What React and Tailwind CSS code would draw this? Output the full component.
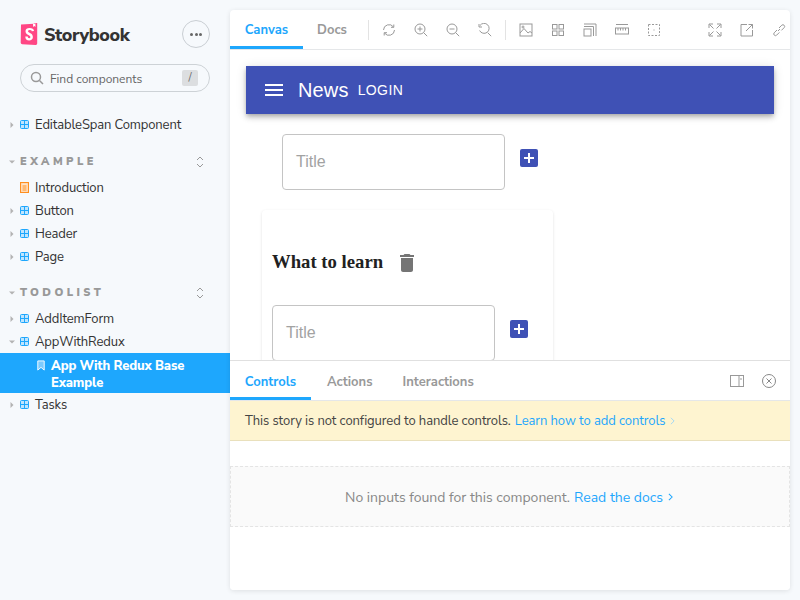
const sans = 'font-["Nunito_Sans","Open_Sans",sans-serif]';

function ComponentIcon({ className = 'text-[#1ea7fd]' }) {
  return (
    <svg viewBox="0 0 9 9" className={`w-[9px] h-[9px] shrink-0 ${className}`} fill="#bfe5fe" stroke="currentColor" strokeWidth="1">
      <rect x="0.5" y="0.5" width="8" height="8" rx="1" />
      <path d="M4.500 0.5V8.500M0.5 4.500H8.500" />
    </svg>
  );
}

function Arrow({ open }) {
  if (open) {
    return (
      <svg viewBox="0 0 6 6" className="w-[6px] h-[6px] shrink-0 text-[#b3b3b3]" fill="currentColor">
        <path d="M0 1.5H6L3 4.5Z" />
      </svg>
    );
  }
  return (
    <svg viewBox="0 0 6 6" className="w-[6px] h-[6px] shrink-0 text-[#b3b3b3]" fill="currentColor">
      <path d="M1.5 0V6L4.500 3Z" />
    </svg>
  );
}

function TreeItem({ label, open, noArrow, icon }) {
  return (
    <div className="flex items-center h-[23px] pl-[9px] text-[13px] text-[#333]">
      <span className="w-[11px] flex">{!noArrow && <Arrow open={open} />}</span>
      {icon || <ComponentIcon />}
      <span className="ml-[6px] pt-[3px] tracking-[-0.12px]">{label}</span>
    </div>
  );
}

function GroupHeader({ label }) {
  return (
    <div className="flex items-center h-[23px] pl-[9px] pr-[25px] mb-[3px]">
      <span className="w-[11px] flex"><Arrow open /></span>
      <span className="flex-1 pt-[2px] text-[11px] font-black tracking-[0.31em] text-[#999]">{label}</span>
      <svg viewBox="0 0 10 12" className="w-[10px] h-[12px] text-[#999]" fill="none" stroke="currentColor" strokeWidth="1">
        <path d="M2 4L5 1L8 4M2 8L5 11L8 8" />
      </svg>
    </div>
  );
}

function Sidebar() {
  return (
    <div className="w-[230px] shrink-0 flex flex-col">
      <div className="flex items-center justify-between px-[20px] pt-[20px]">
        <div className="flex items-center">
          <svg viewBox="0 0 18 22" className="w-[18px] h-[22px]">
            <path d="M1 1.5L14 0.8V0.2L17.2 0V20.5Q17.2 22 15.6 21.9L2.2 21.3Q0.8 21.2 0.7 19.8Z" fill="#ff4785" />
            <path d="M13 0.9L13.2 4L14.4 3.1L15.5 4L15.4 0.6Z" fill="#fff" />
            <path d="M11.8 8.2Q11.8 7.1 9.8 7.1Q8 7.1 8 8.3C8 10 12.9 10 12.9 14C12.9 16.2 11.3 17.4 9.1 17.4C6.8 17.4 5.2 16.1 5.3 13.5L7.7 13.6Q7.7 15.2 9.1 15.2Q10.4 15.2 10.4 14C10.4 12 5.5 12.1 5.5 8.3C5.5 6.1 7.1 5 9.6 5C11.9 5 14.1 5.9 14 8Z" fill="#fff" />
          </svg>
          <span className="ml-[6px] pt-[1px] text-[18px] font-extrabold tracking-[-0.4px] text-[#333] leading-[26px]">Storybook</span>
        </div>
        <div className="w-[28px] h-[28px] rounded-full border border-[#c9ced3] flex items-center justify-center gap-[1.5px]">
          <span className="w-[3px] h-[3px] rounded-full bg-[#666]" />
          <span className="w-[3px] h-[3px] rounded-full bg-[#666]" />
          <span className="w-[3px] h-[3px] rounded-full bg-[#666]" />
        </div>
      </div>
      <div className="mx-[20px] mt-[16px] h-[28px] rounded-full border border-[#cdd2d6] flex items-center pl-[9px] pr-[11px]">
        <svg viewBox="0 0 14 14" className="w-[14px] h-[14px] text-[#999]" fill="none" stroke="currentColor" strokeWidth="1.5">
          <circle cx="6" cy="6" r="4.5" />
          <path d="M9.5 9.5L13 13" />
        </svg>
        <span className="ml-[6px] flex-1 pt-[2px] text-[12px] text-[#666]">Find components</span>
        <span className="w-[16px] h-[16px] bg-[#dcdee0] rounded-[2px] text-[11px] text-[#666] flex items-center justify-center">/</span>
      </div>

      <div className="mt-[21px]">
        <TreeItem label="EditableSpan Component" />
      </div>
      <div className="mt-[14px]">
        <GroupHeader label="EXAMPLE" />
        <TreeItem
          label="Introduction"
          noArrow
          icon={
            <svg viewBox="0 0 9 11" className="w-[9px] h-[11px] shrink-0" fill="#ffe3c7" stroke="#ff8f1f" strokeWidth="1.2">
              <rect x="0.5" y="0.5" width="8" height="10" />
              <path d="M2.500 4H6.500M2.500 6H6.500M2.500 8H6.500" strokeWidth="1" />
            </svg>
          }
        />
        <TreeItem label="Button" />
        <TreeItem label="Header" />
        <TreeItem label="Page" />
      </div>
      <div className="mt-[13px]">
        <GroupHeader label="TODOLIST" />
        <TreeItem label="AddItemForm" />
        <TreeItem label="AppWithRedux" open />
        <div className="flex bg-[#1ea7fd] text-white pl-[36px] pr-[20px] h-[40px]">
          <svg viewBox="0 0 10 12" className="w-[10px] h-[11px] mt-[7px] shrink-0" fill="#7ccbfe" stroke="#fff" strokeWidth="1">
            <path d="M1.5 1H8.5V11L5 8L1.5 11Z" />
          </svg>
          <span className="ml-[5px] text-[13px] font-extrabold leading-[17px] mt-[5px] tracking-[-0.16px]">App With Redux Base Example</span>
        </div>
        <TreeItem label="Tasks" />
      </div>
    </div>
  );
}

function Tool({ children, className = '' }) {
  return (
    <svg viewBox="0 0 14 14" className={`w-[14px] h-[14px] shrink-0 text-[#999] ${className}`} fill="none" stroke="currentColor" strokeWidth="1">
      {children}
    </svg>
  );
}

function Toolbar() {
  return (
    <div className="h-[40px] shrink-0 border-b border-[#e5e7e9] flex items-center overflow-hidden">
      <div className="h-full w-[73px] border-b-[3px] border-[#1ea7fd] text-[#1ea7fd] text-[13px] font-bold flex items-center justify-center pt-[6px]">Canvas</div>
      <div className="w-[58px] pt-[3px] text-[#999] text-[13px] font-bold text-center">Docs</div>
      <div className="w-px h-[20px] bg-[#e3e3e3] ml-[7px]" />
      <div className="flex items-center gap-[18px] ml-[13px]">
        <Tool><path d="M1.5 7A5.5 5.5 0 0 1 11.5 4M12.5 7A5.5 5.5 0 0 1 2.5 10M11.8 1.5V4.3H9M2.2 12.5V9.7H5" /></Tool>
        <Tool><circle cx="6" cy="6" r="5" /><path d="M9.6 9.6L13.2 13.2M3.5 6H8.5M6 3.5V8.5" /></Tool>
        <Tool><circle cx="6" cy="6" r="5" /><path d="M9.6 9.6L13.2 13.2M3.5 6H8.5" /></Tool>
        <Tool><path d="M2 2.5A5 5 0 1 1 1.6 7.5M9.6 9.6L13.2 13.2M1 1V4H4" /></Tool>
      </div>
      <div className="w-px h-[20px] bg-[#e3e3e3] ml-[13px]" />
      <div className="flex items-center gap-[18px] ml-[13px]">
        <Tool><rect x="1" y="1" width="12" height="12" /><path d="M1 10L5 5.5L9 10L11 8.5L13 10" /><circle cx="4" cy="4" r="1" /></Tool>
        <Tool><rect x="1.5" y="1.5" width="4.5" height="4.5" /><rect x="8" y="1.5" width="4.5" height="4.5" /><rect x="1.5" y="8" width="4.5" height="4.5" /><rect x="8" y="8" width="4.5" height="4.5" /></Tool>
        <Tool><rect x="1" y="6" width="7" height="7" /><path d="M1 3.5H10.5V13M1 1H13V13" /></Tool>
        <Tool><rect x="0.5" y="5" width="13" height="6" /><path d="M1 1.5H13M3 5V7.5M5.5 5V7.5M8 5V7.5M10.5 5V7.5" /></Tool>
        <Tool><rect x="1.5" y="1.5" width="11" height="11" strokeDasharray="2 1.5" /><path d="M6.5 7H7.5" /></Tool>
      </div>
      <div className="flex items-center gap-[18px] ml-auto mr-[4px]">
        <Tool><path d="M1 5V1H5M9 1H13V5M13 9V13H9M5 13H1V9M1.5 1.5L5.5 5.5M12.5 1.5L8.5 5.5M12.5 12.5L8.5 8.5M1.5 12.5L5.5 8.5" /></Tool>
        <Tool><path d="M7 1.5H1V13H12.5V7M6 8L12.5 1.5M8.5 1.5H12.5V5.5" /></Tool>
        <Tool><path d="M6 8L8 6M5 7L2.2 9.8A1.7 1.7 0 0 0 4.6 12.2L7.4 9.4M7 5L9.8 2.2A1.7 1.7 0 0 1 12.2 4.6L9.4 7.4" /></Tool>
      </div>
    </div>
  );
}

function TitleInput() {
  return (
    <div className="w-[223px] h-[56px] rounded border border-[#c4c4c4] flex items-center pl-[13px] text-[16px] text-[#a2a2a2]">
      Title
    </div>
  );
}

function PlusButton({ className = '' }) {
  return (
    <div className={`w-[18px] h-[18px] rounded-[2px] bg-[#3f51b5] flex items-center justify-center ${className}`}>
      <svg viewBox="0 0 12 12" className="w-[12px] h-[12px]" fill="none" stroke="#fff" strokeWidth="2">
        <path d="M6 1V11M1 6H11" />
      </svg>
    </div>
  );
}

function Canvas() {
  return (
    <div className='h-[310px] shrink-0 overflow-hidden font-["Liberation_Sans",sans-serif]'>
      <div className="mx-[16px] mt-[16px] h-[48px] bg-[#3f51b5] text-white flex items-center pl-[19px] shadow-[0_2px_4px_-1px_rgba(0,0,0,0.2),0_4px_5px_0_rgba(0,0,0,0.14),0_1px_10px_0_rgba(0,0,0,0.12)]">
        <div className="w-[18px] flex flex-col gap-[3px]">
          <span className="h-[2px] bg-white" />
          <span className="h-[2px] bg-white" />
          <span className="h-[2px] bg-white" />
        </div>
        <span className="ml-[15px] text-[20px] font-medium tracking-[0.15px]">News</span>
        <span className="ml-[9px] text-[14px] font-medium tracking-[0.4px]">LOGIN</span>
      </div>
      <div className="flex ml-[52px] mt-[20px]">
        <TitleInput />
        <PlusButton className="ml-[15px] mt-[15px]" />
      </div>
      <div className="ml-[32px] mt-[20px] w-[291px] h-[300px] rounded bg-white shadow-[0_1px_3px_rgba(0,0,0,0.12)] pl-[10px]">
        <div className='flex items-center pt-[37px] font-["Liberation_Serif",serif] text-[18.72px] font-bold text-[#212121]'>
          <span className="leading-[30px]">What to learn</span>
          <svg viewBox="0 0 24 24" className="w-[24px] h-[24px] ml-[12px] mt-[1px]" fill="#757575">
            <path d="M6 19c0 1.1.9 2 2 2h8c1.100 0 2-.9 2-2V7H6v12zM19 4h-3.500l-1-1h-5l-1 1H5v2h14V4z" />
          </svg>
        </div>
        <div className="flex mt-[28px]">
          <TitleInput />
          <PlusButton className="ml-[15px] mt-[15px]" />
        </div>
      </div>
    </div>
  );
}

function Panel() {
  return (
    <div className="flex-1 flex flex-col border-t border-[#e0e0e0] bg-white min-h-0">
      <div className="h-[40px] shrink-0 border-b border-[#e5e7e9] flex items-center pr-[14px]">
        <div className="h-full w-[81px] border-b-[3px] border-[#1ea7fd] text-[#1ea7fd] text-[13px] font-bold flex items-center justify-center pt-[7px]">Controls</div>
        <div className="ml-[16px] pt-[4px] text-[#999] text-[13px] font-bold">Actions</div>
        <div className="ml-[30px] pt-[4px] text-[#999] text-[13px] font-bold">Interactions</div>
        <div className="ml-auto flex items-center gap-[18px]">
          <Tool><rect x="0.5" y="1.500" width="13" height="11" /><path d="M9 1.500V12.500" /><path d="M11 4V6" /></Tool>
          <svg viewBox="0 0 14 14" className="w-[14px] h-[14px] text-[#888]" fill="none" stroke="currentColor" strokeWidth="1">
            <circle cx="7" cy="7" r="6.500" />
            <path d="M4.500 4.500L9.500 9.500M9.500 4.500L4.500 9.500" />
          </svg>
        </div>
      </div>
      <div className="h-[40px] shrink-0 bg-[#fef4d0] border-b border-[#e9e0bc] flex items-center pl-[15px] text-[13px] text-[#444] tracking-[-0.07px]">
        <span className="pt-[3px]">This story is not configured to handle controls.</span>
        <span className="ml-[4px] pt-[3px] text-[#1ea7fd]">Learn how to add controls</span>
        <svg viewBox="0 0 6 10" className="w-[5px] h-[8px] ml-[5px] mt-[1px] text-[#8fd2fd]" fill="none" stroke="currentColor" strokeWidth="1"><path d="M1 1L5 5L1 9" /></svg>
      </div>
      <div className="mt-[25px] h-[61px] shrink-0 bg-[#fafafa] border border-dashed border-[#e4e4e4] flex items-center justify-center text-[14px] text-[#888] pr-[2px]">
        <span className="pt-[1px]">No inputs found for this component.</span>
        <span className="ml-[4px] pt-[1px] text-[#1ea7fd]">Read the docs</span>
        <svg viewBox="0 0 6 10" className="w-[5px] h-[8px] ml-[5px] mt-[1px] text-[#1ea7fd]" fill="none" stroke="currentColor" strokeWidth="1.300"><path d="M1 1L5 5L1 9" /></svg>
      </div>
    </div>
  );
}

export default function App() {
  return (
    <div className={`w-[800px] h-[600px] flex bg-[#f6f9fc] overflow-hidden ${sans}`}>
      <Sidebar />
      <div className="flex-1 my-[10px] mr-[10px] bg-white rounded shadow-[0_1px_5px_0_rgba(0,0,0,0.1)] flex flex-col overflow-hidden">
        <Toolbar />
        <Canvas />
        <Panel />
      </div>
    </div>
  );
}
